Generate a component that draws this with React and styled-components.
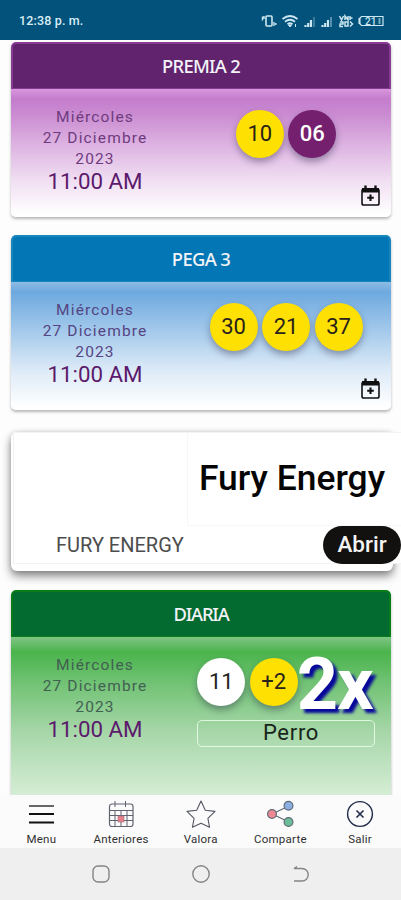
import React from "react";
import styled, { createGlobalStyle } from "styled-components";

const GlobalStyle = createGlobalStyle`
  * { box-sizing: border-box; }
  body { margin: 0; background: #fdfdfd; font-family: Roboto, "Liberation Sans", sans-serif; }
`;

const Screen = styled.div`
  width: 401px;
  height: 900px;
  display: flex;
  flex-direction: column;
  overflow: hidden;
  background: #fdfdfd;
`;

const StatusBar = styled.header`
  flex: 0 0 40px;
  display: flex;
  align-items: center;
  justify-content: space-between;
  padding: 1px 17px 0 19px;
  background: #02527b;
  color: #d8edf6;
  font-size: 12.5px;
  font-weight: 500;
  letter-spacing: 0.15px;
`;

const Results = styled.main`
  flex: 1 1 0;
  min-height: 0;
  overflow: hidden;
  padding: 2px 10px 0 11px;
`;

const Card = styled.section`
  height: ${(p) => p.$height || 175}px;
  margin-bottom: 18px;
  border-radius: 5px;
  overflow: hidden;
  background: linear-gradient(${(p) => p.$fade});
  box-shadow: 0 2px 3px rgba(60, 70, 65, 0.38);
`;

const CardTitle = styled.h2`
  height: 47px;
  margin: 0;
  display: flex;
  align-items: center;
  justify-content: center;
  padding-bottom: 1px;
  border: 1px solid ${(p) => p.$edge};
  border-width: 2px 2px 1px;
  border-radius: 5px 5px 0 0;
  background: ${(p) => p.$color};
  color: #f3f3f8;
  font-family: "Noto Sans", sans-serif;
  font-size: 18.4px;
  font-weight: 500;
  letter-spacing: ${(p) => p.$tracking}px;
`;

const CardBody = styled.div`
  height: 128px;
  display: grid;
  grid-template-columns: 168px 210px;
  column-gap: 2px;
`;

const DrawDate = styled.div`
  display: flex;
  flex-direction: column;
  align-items: center;
  padding-top: 18px;
  color: ${(p) => p.$color};
  font-size: 15.5px;
  line-height: 21px;
  letter-spacing: 1.15px;
`;

const DrawTime = styled.span`
  margin-top: -1px;
  color: #5b1a6c;
  font-size: 22.3px;
  line-height: 25px;
  letter-spacing: 0;
`;

const DrawResult = styled.div`
  display: flex;
  flex-direction: column;
  align-items: center;
  padding-top: 21px;
`;

const Balls = styled.div`
  display: flex;
  gap: 4.5px;
`;

const ballColors = {
  yellow: ["#ffe003", "#28221a"],
  purple: ["#74206f", "#ffffff"],
  white: ["#ffffff", "#222222"],
};

const Ball = styled.span`
  width: 48px;
  height: 48px;
  flex: none;
  display: flex;
  align-items: center;
  justify-content: center;
  padding-bottom: 2px;
  border-radius: 50%;
  background: ${(p) => ballColors[p.$tone][0]};
  color: ${(p) => ballColors[p.$tone][1]};
  font-size: 22px;
  font-weight: ${(p) => (p.$tone === "purple" ? 500 : 400)};
  box-shadow: 0 4px 7px rgba(30, 30, 60, 0.38);
`;

const Multiplier = styled.strong`
  width: 78px;
  height: 48px;
  margin-left: -5.5px;
  color: #fff;
  font-size: 72px;
  font-weight: 700;
  line-height: 53px;
  letter-spacing: -1px;
  text-shadow: 4px 4px 3px #07079a;
`;

const Meaning = styled.div`
  width: 178px;
  height: 27px;
  margin-top: 14px;
  display: flex;
  align-items: center;
  justify-content: center;
  padding: 0 0 3px 10px;
  border: 1px solid rgba(240, 255, 240, 0.8);
  border-radius: 5px;
  color: #17251a;
  font-size: 22px;
  letter-spacing: 0.7px;
`;

const AddReminder = styled.button`
  width: 21px;
  height: 23px;
  margin: auto 10px 10px auto;
  padding: 0;
  border: 0;
  background: none;
  display: flex;
`;

const AdCard = styled.section`
  width: 382px;
  height: 139px;
  margin: 22px 0 19px;
  border-radius: 6px;
  background: #fff;
  box-shadow: 0 5px 10px rgba(0, 0, 0, 0.48), 0 0 5px rgba(0, 0, 0, 0.12);
`;

const AdFrame = styled.div`
  width: 389px;
  height: 132px;
  margin-left: 2px;
  border: 1px solid #f3f3f3;
  background: #fff;
  display: grid;
  grid-template-rows: 93px 38px;
`;

const AdHeadline = styled.div`
  margin-left: 173px;
  padding: 0 0 3px 11px;
  border-left: 1px solid #f7f7f7;
  border-bottom: 1px solid #f7f7f7;
  display: flex;
  align-items: center;
  color: #050505;
  font-size: 35.4px;
  font-weight: 500;
  white-space: nowrap;
`;

const AdFooter = styled.div`
  display: flex;
  align-items: center;
  justify-content: space-between;
  padding-left: 42px;
  color: #4d4d4d;
  font-size: 20px;
`;

const OpenButton = styled.button`
  width: 78px;
  height: 38px;
  border: 0;
  border-radius: 19px;
  background: #13110f;
  color: #f4f4f4;
  font: 500 22.5px Roboto, sans-serif;
  padding: 0 0 2px;
`;

const BottomNav = styled.nav`
  flex: 0 0 53px;
  display: grid;
  grid-template-columns: repeat(5, 79.7px);
  padding: 5px 0 0 1.5px;
  background: #fbfbfb;
`;

const NavItem = styled.a`
  display: flex;
  flex-direction: column;
  align-items: center;
  gap: 4px;
  color: #303030;
  font-size: 11.5px;
  line-height: 14px;
  letter-spacing: 0.25px;
`;

const SystemNav = styled.footer`
  flex: 0 0 52px;
  display: grid;
  grid-template-columns: repeat(3, 100px);
  justify-content: center;
  justify-items: center;
  align-items: center;
  background: #efefef;
`;

const StatusIcons = () => (
  <svg width="123" height="16" viewBox="0 0 123 16" fill="none" stroke="#cce7f1">
    <rect x="5" y="3" width="6" height="10" rx="1" strokeWidth="1.6" />
    <path d="M1.5 3.5v4M3 3v3M13 9v4M14.8 10v2" strokeWidth="1.4" />
    <path d="M21.5 6q7.5-6 15 0M24 8.8q5-4 10 0M26.5 11.2q2.5-2 5 0" strokeWidth="1.8" />
    <path d="M27.5 12h3L29 14z" fill="#cce7f1" />
    <path d="M34.5 11v3" />
    <path d="M44.500 14v-2M47.200 14v-4M50 14V7" strokeWidth="2.200" />
    <path d="M53 14V4" stroke="#4d8aa6" strokeWidth="1.500" />
    <path d="M61.500 14v-2M64.200 14v-4M67 14V7" strokeWidth="2.200" />
    <path d="M70 14V4" stroke="#6fa4ba" strokeWidth="1.500" />
    <path d="M78.500 3l2 4 2-4M84 7V3l3 4V3M89 7V3M89 5h2.500M79 9h3v2h-3v2.500h3M84 9h3v4h-3zM89 8.500l2.500 2.500-2.500 2.500" strokeWidth="1.500" />
    <path d="M100.500 3.500H122v9h-21.500l-2-2V5.500z" strokeWidth="1.200" />
    <path d="M98.500 5v6" strokeWidth="2" />
    <text x="104" y="11.800" fill="#cce7f1" stroke="none" fontSize="10" fontFamily="Roboto">21</text>
    <path d="M118.500 5v6" strokeWidth="2" stroke="#78aabd" />
  </svg>
);

const CalendarPlusIcon = () => (
  <svg width="21" height="23" viewBox="0 0 21 23" fill="none" stroke="#111">
    <rect x="2" y="5" width="17" height="16" rx="1.8" strokeWidth="1.6" />
    <path d="M2 4h17v4.500H2z" fill="#111" stroke="none" />
    <path d="M5.500 1.500v3M15.500 1.500v3" strokeWidth="2.400" />
    <path d="M10.500 10.500v6.600M7.200 13.800h6.600" strokeWidth="2.100" />
  </svg>
);

const MenuIcon = () => (
  <svg width="28" height="28" viewBox="0 0 28 28" fill="none" strokeWidth="2">
    <path d="M2 6h25" stroke="#666" />
    <path d="M2 14h25M2 22.500h25" stroke="#111" />
  </svg>
);

const CalendarIcon = () => (
  <svg width="28" height="28" viewBox="0 0 28 28" fill="none" stroke="#606370">
    <rect x="2.500" y="4" width="23.500" height="22.500" rx="2.500" strokeWidth="1.200" />
    <path d="M2 10.500h24M2 15.500h24M2 20.500h24M8 10v16M14 10v16M20 10v16M8 1v6M18.500 1v6" />
    <rect x="11" y="16" width="6" height="6" fill="#e47f8b" stroke="#a36f7c" strokeWidth=".6" />
  </svg>
);

const StarIcon = () => (
  <svg width="30" height="28" viewBox="0 0 30 28" fill="none" stroke="#555762" strokeWidth="1.100" strokeLinejoin="round">
    <path d="M15 1l4.300 9.200 9.700 1.200-7.100 6.900 1.700 9-8.600-4.100-8.600 4.100 1.700-9L1 11.400l9.700-1.200z" />
  </svg>
);

const ShareIcon = () => (
  <svg width="28" height="28" viewBox="0 0 28 28" stroke="#606b78" strokeWidth="1.200">
    <path d="M6 14l17-8M6 14l17 8" />
    <circle cx="6" cy="14" r="4.400" fill="#ee8991" />
    <circle cx="22.500" cy="5.800" r="4.400" fill="#8baee1" />
    <circle cx="22.500" cy="22" r="4.400" fill="#6bbd98" />
  </svg>
);

const ExitIcon = () => (
  <svg width="28" height="28" viewBox="0 0 28 28" fill="none" stroke="#202b49">
    <circle cx="14" cy="14" r="12.400" strokeWidth="1.400" />
    <path d="M10.500 10.500l7 7M17.500 10.500l-7 7" strokeWidth="1.600" />
  </svg>
);

const navItems = [
  ["Menu", MenuIcon],
  ["Anteriores", CalendarIcon],
  ["Valora", StarIcon],
  ["Comparte", ShareIcon],
  ["Salir", ExitIcon],
];

const draws = {
  premia: {
    title: "PREMIA 2", color: "#61236d", edge: "#843b91", tracking: -0.75, ink: "#6f3b7e",
    fade: "#d797dc 47px, #c47dcd 57px, #ca8bd1 72px, #dbafe0 100px, #f0def2 138px, #fff 172px",
    balls: [["10", "yellow"], ["06", "purple"]],
  },
  pega: {
    title: "PEGA 3", color: "#0376b5", edge: "#1686bd", tracking: -0.65, ink: "#554481",
    fade: "#8dbce4 47px, #6da9df 57px, #9ec6ea 92px, #dceaf7 135px, #fff 172px",
    balls: [["30", "yellow"], ["21", "yellow"], ["37", "yellow"]],
  },
  diaria: {
    title: "DIARIA", color: "#036b30", edge: "#087d17", tracking: -1.2, ink: "#416052", height: 240,
    fade: "#80c486 47px, #4ab44c 62px, #70c273 92px, #a5d6a7 140px, #d5edd5 205px, #fff 240px",
    balls: [["11", "white"], ["+2", "yellow"]], multiplier: "2x", meaning: "Perro",
  },
};

const DrawCard = ({ draw }) => (
  <Card $fade={draw.fade} $height={draw.height}>
    <CardTitle $color={draw.color} $edge={draw.edge} $tracking={draw.tracking}>{draw.title}</CardTitle>
    <CardBody>
      <DrawDate $color={draw.ink}>
        <span>Miércoles</span>
        <span>27 Diciembre</span>
        <span>2023</span>
        <DrawTime>11:00 AM</DrawTime>
      </DrawDate>
      <DrawResult>
        <Balls>
          {draw.balls.map(([number, tone]) => <Ball key={number} $tone={tone}>{number}</Ball>)}
          {draw.multiplier && <Multiplier>{draw.multiplier}</Multiplier>}
        </Balls>
        {draw.meaning ? <Meaning>{draw.meaning}</Meaning> : <AddReminder aria-label="Agregar recordatorio"><CalendarPlusIcon /></AddReminder>}
      </DrawResult>
    </CardBody>
  </Card>
);

export default function App() {
  return (
    <Screen>
      <GlobalStyle />
      <StatusBar><span>12:38 p. m.</span><StatusIcons /></StatusBar>
      <Results>
        <DrawCard draw={draws.premia} />
        <DrawCard draw={draws.pega} />
        <AdCard>
          <AdFrame>
            <AdHeadline>Fury Energy</AdHeadline>
            <AdFooter><span>FURY ENERGY</span><OpenButton>Abrir</OpenButton></AdFooter>
          </AdFrame>
        </AdCard>
        <DrawCard draw={draws.diaria} />
      </Results>
      <BottomNav>
        {navItems.map(([label, Icon]) => <NavItem key={label}><Icon />{label}</NavItem>)}
      </BottomNav>
      <SystemNav>
        <svg width="20" height="20" viewBox="0 0 20 20" fill="none" stroke="#858585" strokeWidth="1.400"><rect x="2" y="2" width="16" height="16" rx="5" /></svg>
        <svg width="20" height="20" viewBox="0 0 20 20" fill="none" stroke="#858585" strokeWidth="1.400"><circle cx="10" cy="10" r="8.200" /></svg>
        <svg width="20" height="20" viewBox="0 0 20 20" fill="none" stroke="#858585" strokeWidth="1.400"><path d="M3 4.500h8a6 6 0 0 1 0 12.500H3M6 2.500L3 4.500" /></svg>
      </SystemNav>
    </Screen>
  );
}
